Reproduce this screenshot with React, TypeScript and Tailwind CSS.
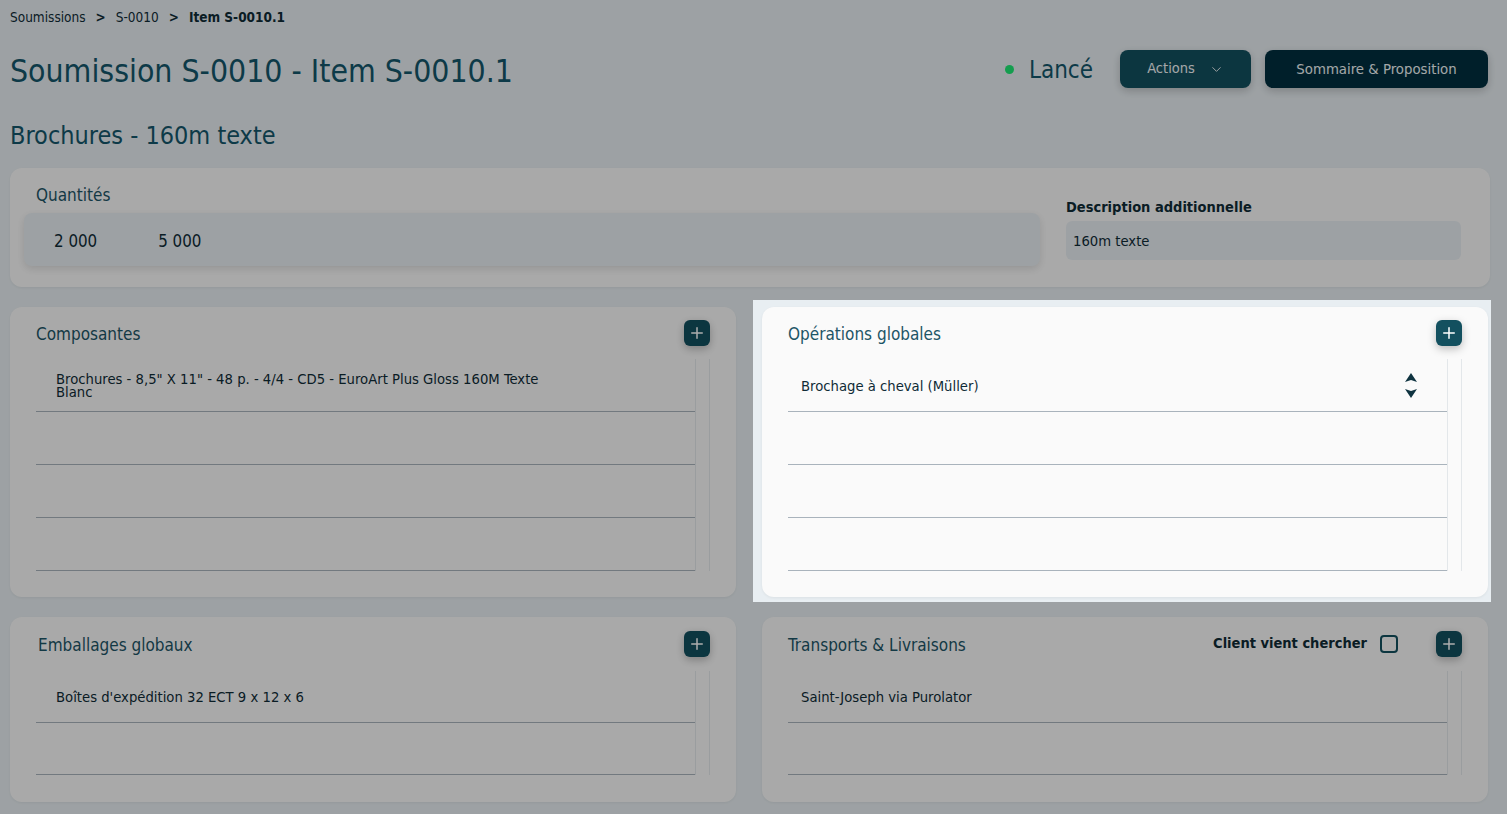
import { ChevronDown, Plus } from "lucide-react";

const teal = "text-[#14566a]";

function AddButton() {
  return (
    <button className="flex items-center justify-center w-[26px] h-[26px] rounded-md bg-[#13505f] text-white shadow-[0_3px_8px_rgba(0,0,0,0.25)]">
      <Plus size={18} strokeWidth={2} />
    </button>
  );
}

function SortArrows() {
  return (
    <div className="flex flex-col items-center gap-[7px]">
      <svg width="12" height="9" viewBox="0 0 12 9">
        <path d="M6 0 L12 9 L6 7 L0 9 Z" fill="#0f3340" />
      </svg>
      <svg width="12" height="9" viewBox="0 0 12 9">
        <path d="M0 0 L6 2 L12 0 L6 9 Z" fill="#0f3340" />
      </svg>
    </div>
  );
}

type Row = { text?: string; sort?: boolean };

function ListCard({
  title,
  rows,
  rowHeight,
  textPad,
  extra,
  titleOffset,
  compact,
}: {
  title: string;
  rows: Row[];
  rowHeight: string;
  textPad: string;
  extra?: React.ReactNode;
  titleOffset?: string;
  compact?: boolean;
}) {
  return (
    <div
      className={`bg-[#fafafa] rounded-xl px-[26px] shadow-[0_1px_3px_rgba(0,0,0,0.06)] ${
        compact ? "pt-[14px] pb-[27px]" : "pt-[13px] pb-[26px]"
      }`}
    >
      <div className="flex items-center justify-between h-[26px]">
        <h2 className={`pt-[4px] text-[17px] text-[#1d5566] ${titleOffset ?? ""}`}>{title}</h2>
        <div className="flex items-center">
          {extra}
          <AddButton />
        </div>
      </div>
      <div className={`flex border-r border-[#e3e7ea] ${compact ? "mt-[14px]" : "mt-[13px]"}`}>
        <div className="flex-1 border-r border-[#e3e7ea]">
          {rows.map((r, i) => (
            <div
              key={i}
              className={`flex items-center justify-between border-b border-[#a9b3bc] ${rowHeight} ${textPad} pr-[30px]`}
            >
              <span className="text-[14.7px] leading-[13px] text-[#0f2b36] max-w-[505px]">{r.text}</span>
              {r.sort && <SortArrows />}
            </div>
          ))}
        </div>
        <div className="w-[13px]" />
      </div>
    </div>
  );
}

export default function App() {
  return (
    <div className="h-screen overflow-hidden bg-[#e8eef2] font-['DejaVu_Sans_Condensed','DejaVu_Sans',sans-serif] pl-[10px] pr-[19px] pt-[9px]">
      {/* breadcrumb */}
      <div className="flex items-center gap-[10px] text-[13.5px] leading-[16px] text-[#0f2b36]">
        <span>Soumissions</span>
        <span className="font-bold">&gt;</span>
        <span>S-0010</span>
        <span className="font-bold">&gt;</span>
        <span className="font-bold">Item S-0010.1</span>
      </div>

      {/* header */}
      <div className="mt-[25px] flex items-center justify-between h-[38px]">
        <h1 className={`mt-[4px] text-[31.7px] leading-[38px] ${teal}`}>Soumission S-0010 - Item S-0010.1</h1>
        <div className="flex items-center">
          <span className="w-[9px] h-[9px] rounded-full bg-[#1ee874]" />
          <span className={`ml-[15px] mt-[2px] text-[24px] ${teal}`}>Lancé</span>
          <button className="ml-[27px] w-[131px] h-[38px] rounded-lg bg-[#13505f] text-[#f2f6f8] text-[14.5px] flex items-center justify-center gap-[14px] shadow-[0_3px_8px_rgba(0,0,0,0.2)]">
            Actions
            <ChevronDown size={15} strokeWidth={1.5} />
          </button>
          <button className="ml-[14px] w-[223px] h-[38px] rounded-lg bg-[#002f3f] text-[#f2f6f8] text-[14.8px] shadow-[0_3px_8px_rgba(0,0,0,0.2)]">
            Sommaire &amp; Proposition
          </button>
        </div>
      </div>

      <h2 className={`mt-[34px] text-[25px] leading-[28px] ${teal}`}>Brochures - 160m texte</h2>

      {/* quantités */}
      <div className="mt-[18px] -mr-[2px] bg-[#fafafa] rounded-xl flex items-start pl-[14px] pr-[29px] pb-[21px] shadow-[0_1px_3px_rgba(0,0,0,0.06)]">
        <div className="flex-1 pt-[17px]">
          <div className="ml-[12px] text-[17px] leading-[20px] text-[#1d5566]">Quantités</div>
          <div className="mt-[8px] h-[53px] rounded-lg bg-[#e8eef2] flex items-center gap-[61px] px-[30px] pt-[5px] text-[16.8px] text-[#0f2b36] shadow-[0_3px_8px_rgba(0,0,0,0.12)]">
            <span>2 000</span>
            <span>5 000</span>
          </div>
        </div>
        <div className="w-[395px] ml-[26px] pt-[31px]">
          <div className="text-[14.5px] leading-[16px] font-bold text-[#0f2b36]">Description additionnelle</div>
          <div className="mt-[6px] h-[39px] rounded-md bg-[#e8eef2] flex items-center px-[7px] pt-[1px] text-[14.7px] text-[#0f2b36]">
            160m texte
          </div>
        </div>
      </div>

      {/* row 2 */}
      <div className="mt-5 grid grid-cols-2 gap-[26px]">
        <ListCard
          title="Composantes"
          rowHeight="h-[53px]"
          textPad="pl-[20px]"
          rows={[
            { text: 'Brochures - 8,5" X 11" - 48 p. - 4/4 - CD5 - EuroArt Plus Gloss 160M Texte Blanc' },
            {},
            {},
            {},
          ]}
        />
        <div className="relative">
          <div className="pointer-events-none absolute -left-[9px] -right-[3px] -top-[7px] -bottom-[5px] z-10 shadow-[0_0_0_9999px_rgba(0,0,0,0.32)]" />
          <ListCard
            title="Opérations globales"
            rowHeight="h-[53px]"
            textPad="pl-[13px]"
            rows={[{ text: "Brochage à cheval (Müller)", sort: true }, {}, {}, {}]}
          />
        </div>
      </div>

      {/* row 3 */}
      <div className="mt-5 grid grid-cols-2 gap-[26px]">
        <ListCard
          compact
          title="Emballages globaux"
          titleOffset="ml-[2px]"
          rowHeight="h-[52px]"
          textPad="pl-[20px]"
          rows={[{ text: "Boîtes d'expédition 32 ECT 9 x 12 x 6" }, {}]}
        />
        <ListCard
          compact
          title="Transports & Livraisons"
          rowHeight="h-[52px]"
          textPad="pl-[13px]"
          rows={[{ text: "Saint-Joseph via Purolator" }, {}]}
          extra={
            <label className="flex items-center mr-[38px]">
              <span className="text-[14.5px] font-bold text-[#0f2b36]">Client vient chercher</span>
              <span className="ml-[13px] w-[18px] h-[18px] rounded-[4px] border-2 border-[#13505f]" />
            </label>
          }
        />
      </div>
    </div>
  );
}
